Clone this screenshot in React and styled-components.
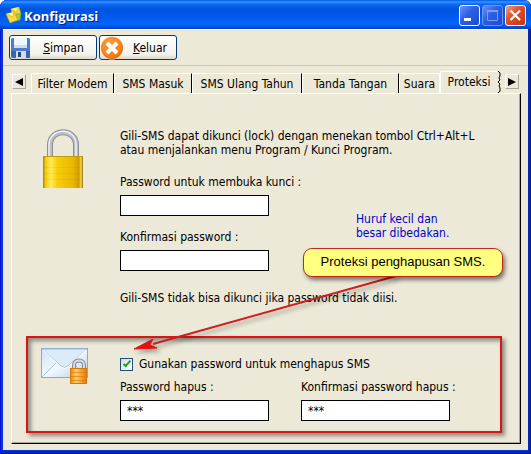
import styled, { createGlobalStyle } from "styled-components";

const GlobalStyle = createGlobalStyle`
    *, *::before, *::after {
        box-sizing: border-box;
    }

    body {
        margin: 0;
        background: #fff;
        font: 12px/14px "DejaVu Sans Condensed", "Noto Sans", sans-serif;
        color: #000;
    }

    button, input {
        font: inherit;
        color: inherit;
    }

    p {
        margin: 0;
    }
`

const tabs = [
    { name: "Filter Modem", width: 83 },
    { name: "SMS Masuk", width: 78 },
    { name: "SMS Ulang Tahun", width: 110 },
    { name: "Tanda Tangan", width: 97 },
    { name: "Suara", width: 41 },
    { name: "Proteksi", width: 58, selected: true },
];

const Field = ({ id, label, ...otherProps }) => (
    <FieldGroup>
        <label htmlFor={ id }>{ label }</label>
        <TextInput id={ id } { ...otherProps } />
    </FieldGroup>
)

const AppIcon = () => (
    <svg width="16" height="17" viewBox="0 0 16 17" aria-hidden="true">
        <path d="M5 2 L13 0 L15 7 L7 10 Z" fill="#f0d840" stroke="#c9a114" strokeWidth=".6" />
        <path d="M5 2 L10 5 L13 0" fill="#fff27a" stroke="#d5ad20" strokeWidth=".6" />
        <path d="M10 7 L15 6 L14 13 L9 14 Z" fill="#9bcf3c" stroke="#7aa82a" strokeWidth=".6" />
        <path d="M0 7 L8 5 L12 13 L4 16 Z" fill="#ffdb3a" stroke="#b9991c" strokeWidth=".6" />
        <path d="M0 7 L7 10 L8 5" fill="#fff68c" stroke="#caa21c" strokeWidth=".6" />
    </svg>
)

const DiskIcon = () => (
    <svg width="21" height="22" viewBox="0 0 21 22" aria-hidden="true">
        <rect x="1" y="1" width="19" height="20" rx="1.500" fill="#4a7cca" />
        <path d="M1 14 H20 V19.500 Q20 21 18.500 21 H4 L1 18.500 Z" fill="#3764ac" />
        <rect x="4" y="1" width="13" height="10" fill="#eef5fb" />
        <path d="M4 8 H17 V11 H4 Z" fill="#cbdcee" />
        <rect x="6" y="14" width="10" height="7" fill="#d5dbe3" />
        <rect x="8" y="15" width="3" height="5" fill="#27477c" />
    </svg>
)

const CloseRoundIcon = () => (
    <svg width="24" height="24" viewBox="0 0 24 24" aria-hidden="true">
        <defs>
            <radialGradient id="orange" cx=".4" cy=".3" r=".8">
                <stop offset="0" stopColor="#ffa030" />
                <stop offset=".6" stopColor="#f6841a" />
                <stop offset="1" stopColor="#e06a07" />
            </radialGradient>
        </defs>
        <circle cx="12" cy="12" r="11.500" fill="#d5dbe4" />
        <circle cx="12" cy="12" r="11" fill="url(#orange)" />
        <path d="M7 7 L17 17 M17 7 L7 17" stroke="#fff" strokeWidth="4" />
    </svg>
)

const PadlockIcon = () => (
    <svg width="42" height="60" viewBox="0 0 42 60" aria-hidden="true">
        <defs>
            <linearGradient id="gold">
                <stop offset="0" stopColor="#a98000" />
                <stop offset=".06" stopColor="#f3c808" />
                <stop offset=".2" stopColor="#ffec55" />
                <stop offset=".35" stopColor="#f7ce0c" />
                <stop offset=".75" stopColor="#e9b800" />
                <stop offset=".9" stopColor="#cf9c00" />
                <stop offset=".95" stopColor="#f6d95c" />
                <stop offset="1" stopColor="#8f6b00" />
            </linearGradient>
        </defs>
        <path d="M7 28 V16 C7 -1 33 -1 33 16 V28" fill="none" stroke="#8c8e93" strokeWidth="6" />
        <path d="M7 28 V16 C7 -1 33 -1 33 16 V28" fill="none" stroke="#bdbfc4" strokeWidth="4" />
        <path d="M6 28 V16 C6 -2 33 -2 33 15 V28" fill="none" stroke="#eceef1" strokeWidth="1.500" />
        <rect width="40" height="32" y="27" fill="url(#gold)" />
        <path d="M0 27.500 H40" stroke="#c3990d" />
        <path d="M1 38.500 H38 M1 44.500 H38 M1 50.500 H38" stroke="#b88900" opacity=".12" />
    </svg>
)

const MailLockIcon = () => (
    <svg width="48" height="37" viewBox="0 0 48 37" aria-hidden="true">
        <defs>
            <linearGradient id="paper" x2="1" y2="1">
                <stop offset="0" stopColor="#cfe2f6" />
                <stop offset=".5" stopColor="#f2f8fe" />
                <stop offset="1" stopColor="#b4cdea" />
            </linearGradient>
            <linearGradient id="amber">
                <stop offset="0" stopColor="#ee8a0c" />
                <stop offset=".35" stopColor="#ffc963" />
                <stop offset="1" stopColor="#ea7c05" />
            </linearGradient>
        </defs>
        <rect x=".5" y=".5" width="46" height="29" fill="url(#paper)" stroke="#8aa9cb" />
        <path d="M1 29 L17 13 M46 29 L30 13" stroke="#a8c2df" />
        <path d="M1 1 L20 18 Q23.500 21 27 18 L46 1 Z" fill="#dcebfa" stroke="#9db9d8" />
        <path d="M2 2 L20 19 Q23.500 22 27 19 L45 2" fill="none" stroke="#fff" />
        <path d="M33 22 V17 C33 11 43 11 43 17 V22" fill="none" stroke="#85898f" strokeWidth="4" />
        <path d="M33 22 V17 C33 11 43 11 43 17 V22" fill="none" stroke="#d9dce0" strokeWidth="2" />
        <rect x="29.500" y="20.500" width="16" height="15" fill="url(#amber)" stroke="#d9770b" />
        <path d="M30 24.500 H45 M30 28.500 H45 M30 32.500 H45" stroke="#c96a00" opacity=".45" />
    </svg>
)

const App = () => (
    <>
        <GlobalStyle />
        <Window>
            <TitleBar>
                <AppIcon />
                <Title>Konfigurasi</Title>
                <Caption aria-label="Minimize">
                    <svg width="19" height="19"><path d="M4 12 H11 V15 H4 Z" fill="#fff" /></svg>
                </Caption>
                <Caption aria-label="Maximize" disabled>
                    <svg width="19" height="19">
                        <path d="M4.500 5 V14.500 H14.500 V5" fill="none" stroke="#7d9df0" />
                        <path d="M4 5 H15" stroke="#7d9df0" strokeWidth="2" />
                    </svg>
                </Caption>
                <Caption aria-label="Close" $danger>
                    <svg width="19" height="19"><path d="M4.500 4.500 L14 14 M14 4.500 L4.500 14" stroke="#fff" strokeWidth="2.200" /></svg>
                </Caption>
            </TitleBar>

            <Client>
                <Toolbar>
                    <ToolButton $width={ 88 }>
                        <DiskIcon />
                        <span><u>S</u>impan</span>
                    </ToolButton>
                    <ToolButton $width={ 78 }>
                        <CloseRoundIcon />
                        <span><u>K</u>eluar</span>
                    </ToolButton>
                </Toolbar>

                <TabRow>
                    <ScrollButton aria-label="Previous tabs">
                        <svg width="8" height="8"><path d="M8 0 V8 L0 4 Z" /></svg>
                    </ScrollButton>
                    <TabList role="tablist">
                        { tabs.map( tab => (
                            <Tab
                                key={ tab.name }
                                role="tab"
                                aria-selected={ !!tab.selected }
                                $width={ tab.width }
                                $selected={ tab.selected }>
                                    { tab.name }
                            </Tab>
                        ) ) }
                        <svg width="4" height="22" viewBox="0 0 4 22" aria-hidden="true">
                            <path d="M0 0 L2 2 V5 L1 7 L2 9 L0 11 L2 13 L1 15 L2 17 V20 L0 22" fill="none" stroke="#000" />
                        </svg>
                    </TabList>
                    <ScrollButton aria-label="Next tabs">
                        <svg width="8" height="8"><path d="M0 0 V8 L8 4 Z" /></svg>
                    </ScrollButton>
                </TabRow>

                <Panel role="tabpanel">
                    <LockSection>
                        <PadlockIcon />
                        <div>
                            <p>
                                Gili-SMS dapat dikunci (lock) dengan menekan tombol Ctrl+Alt+L<br />
                                atau menjalankan menu Program / Kunci Program.
                            </p>
                            <PasswordRow>
                                <FieldStack>
                                    <Field id="password" type="password" label="Password untuk membuka kunci :" />
                                    <Field id="confirm" type="password" label="Konfirmasi password :" />
                                </FieldStack>
                                <Hint>
                                    Huruf kecil dan<br />
                                    besar dibedakan.
                                </Hint>
                            </PasswordRow>
                            <p>Gili-SMS tidak bisa dikunci jika password tidak diisi.</p>
                        </div>
                    </LockSection>

                    <DeleteSection>
                        <MailLockIcon />
                        <div>
                            <CheckLabel>
                                <Checkbox type="checkbox" defaultChecked />
                                Gunakan password untuk menghapus SMS
                            </CheckLabel>
                            <DeleteFields>
                                <Field id="delete-password" label="Password hapus :" defaultValue="***" />
                                <Field id="delete-confirm" label="Konfirmasi password hapus :" defaultValue="***" />
                            </DeleteFields>
                        </div>
                    </DeleteSection>

                    <Arrow width="290" height="100" viewBox="0 0 290 100" aria-hidden="true">
                        <path d="M273 9 L30 77" stroke="#cf1c1c" strokeWidth="2" />
                        <path d="M11 82 L30 72 L27 78 L34 81 Z" fill="#e01212" stroke="#e01212" />
                    </Arrow>
                    <Callout>Proteksi penghapusan SMS.</Callout>
                </Panel>
            </Client>
        </Window>
    </>
)

const Window = styled.div`
    display: flex;
    flex-direction: column;
    min-height: 100vh;
    padding: 0 3px 4px;
    overflow: hidden;
    border-radius: 7px 7px 0 0;
    background: #0831d9;
    box-shadow: inset 1px 0 #0019cf, inset -1px -1px #00138c, inset -3px -3px #0029b5;
`
const TitleBar = styled.header`
    display: flex;
    align-items: center;
    gap: 2px;
    height: 29px;
    margin: 0 -3px;
    padding: 2px 5px 0 6px;
    background: linear-gradient(#0058e6 0, #3a93ff 2px, #0a6bf5 4px, #0055e0 9px, #0058ea 16px, #0066fc 24px, #0050dc 27px, #003dc4 29px);
`
const Title = styled.h1`
    flex: 1;
    margin: 0;
    font: bold 13px/18px "Open Sans", sans-serif;
    color: #fff;
    text-shadow: 1px 1px 1px #0f1089;
`
const Caption = styled.button`
    display: flex;
    width: 21px;
    height: 21px;
    padding: 0;
    border: 1px solid ${ ({ disabled }) => disabled ? "#6f93ec" : "#fff" };
    border-radius: 3px;
    background: ${ ({ $danger }) => $danger
        ? "linear-gradient(135deg, #f0a08a, #e2502c 40%, #c2340f)"
        : "linear-gradient(135deg, #6b92f5, #2a5fe6 45%, #1b4bd0)" };
`
const Client = styled.main`
    display: flex;
    flex: 1;
    flex-direction: column;
    padding: 0 7px 6px 8px;
    background: #ece9d8;
`
const Toolbar = styled.div`
    display: flex;
    gap: 2px;
    margin: 0 -7px 0 -8px;
    padding: 5px 6px;
    border-top: 1px solid #fff;
    border-bottom: 1px solid #cdc9b8;
`
const ToolButton = styled.button`
    display: flex;
    align-items: center;
    width: ${ ({ $width }) => $width }px;
    height: 25px;
    padding: 0;
    border: 1px solid #003c74;
    border-radius: 3px;
    background: linear-gradient(#fff, #f3f2ea 80%, #dcd7cb);

    & span {
        flex: 1;
        text-align: center;
    }
`
const TabRow = styled.div`
    display: flex;
    align-items: center;
    gap: 2px;
    height: 27px;
    padding: 4px 2px 0 1px;
`
const ScrollButton = styled.button`
    display: flex;
    flex: none;
    align-items: center;
    justify-content: center;
    width: 14px;
    height: 15px;
    padding: 0;
    border: 1px solid;
    border-color: #fff #aca899 #aca899 #fff;
    background: #ece9d8;
`
const TabList = styled.div`
    display: flex;
    flex: 1;
    align-items: flex-end;
    align-self: stretch;
    padding-left: 3px;
`
const Tab = styled.button`
    flex: none;
    width: ${ ({ $width }) => $width }px;
    height: ${ ({ $selected }) => $selected ? 23 : 20 }px;
    margin-bottom: ${ ({ $selected }) => $selected ? -1 : 0 }px;
    padding: ${ ({ $selected }) => $selected ? "0 0 3px" : "0" };
    border: 1px solid #fff;
    border-right-color: ${ ({ $selected }) => $selected ? "#ece9d8" : "#000" };
    border-bottom: 0;
    border-radius: 2px 0 0 0;
    background: #ece9d8;
    white-space: nowrap;

    &:nth-of-type(5) {
        border-right-color: #fff;
    }
`
const Panel = styled.section`
    position: relative;
    flex: 1;
    border: 1px solid;
    border-color: #fff #000 #000 #fff;
    box-shadow: inset -1px -1px #aca899;
`
const LockSection = styled.div`
    display: grid;
    grid-template-columns: 77px 1fr;
    padding: 35px 0 31px 31px;
`
const PasswordRow = styled.div`
    display: flex;
    gap: 87px;
    padding: 18px 0 20px;
`
const FieldStack = styled.div`
    display: grid;
    gap: 14px;
    width: 149px;
`
const FieldGroup = styled.div`
    display: grid;
    grid-template-columns: minmax(0, 1fr);
    gap: 6px;
    width: 149px;
    white-space: nowrap;
`
const TextInput = styled.input`
    width: 100%;
    height: 21px;
    padding: 0 6px;
    border: 1px solid #000;
    border-radius: 0;
    background: #fff;
`
const Hint = styled.p`
    padding-top: 37px;
    color: #0000d0;
`
const DeleteSection = styled.div`
    display: grid;
    grid-template-columns: 79px 1fr;
    margin: 0 18px 10px 14px;
    padding: 10px 0 10px 13px;
    border: 2px solid #dc1414;
    box-shadow: 3px 3px 4px rgba(0, 0, 0, .4), inset 3px 3px 4px rgba(0, 0, 0, .4);
`
const CheckLabel = styled.label`
    display: flex;
    align-items: center;
    gap: 6px;
    padding: 9px 0;
`
const Checkbox = styled.input`
    appearance: none;
    width: 13px;
    height: 13px;
    margin: 0;
    border: 1px solid #1c5180;
    background: linear-gradient(135deg, #dcdcd7, #fff);

    &:checked::after {
        content: "";
        display: block;
        width: 4px;
        height: 8px;
        margin: 0 auto;
        border: solid #21a121;
        border-width: 0 2px 2px 0;
        transform: rotate(42deg);
    }
`
const DeleteFields = styled.div`
    display: flex;
    gap: 32px;
`
const Arrow = styled.svg`
    position: absolute;
    top: 173px;
    left: 111px;
    filter: drop-shadow(3px 3px 2px rgba(0, 0, 0, .35));
    pointer-events: none;
`
const Callout = styled.div`
    position: absolute;
    top: 154px;
    left: 291px;
    width: 200px;
    padding: 5px 0 6px;
    border: 1px solid #c4281c;
    border-radius: 9px;
    background: #ffff80;
    box-shadow: 2px 3px 4px rgba(0, 0, 0, .5);
    font: 13px/16px "Liberation Sans", sans-serif;
    text-align: center;
`

export default App;
